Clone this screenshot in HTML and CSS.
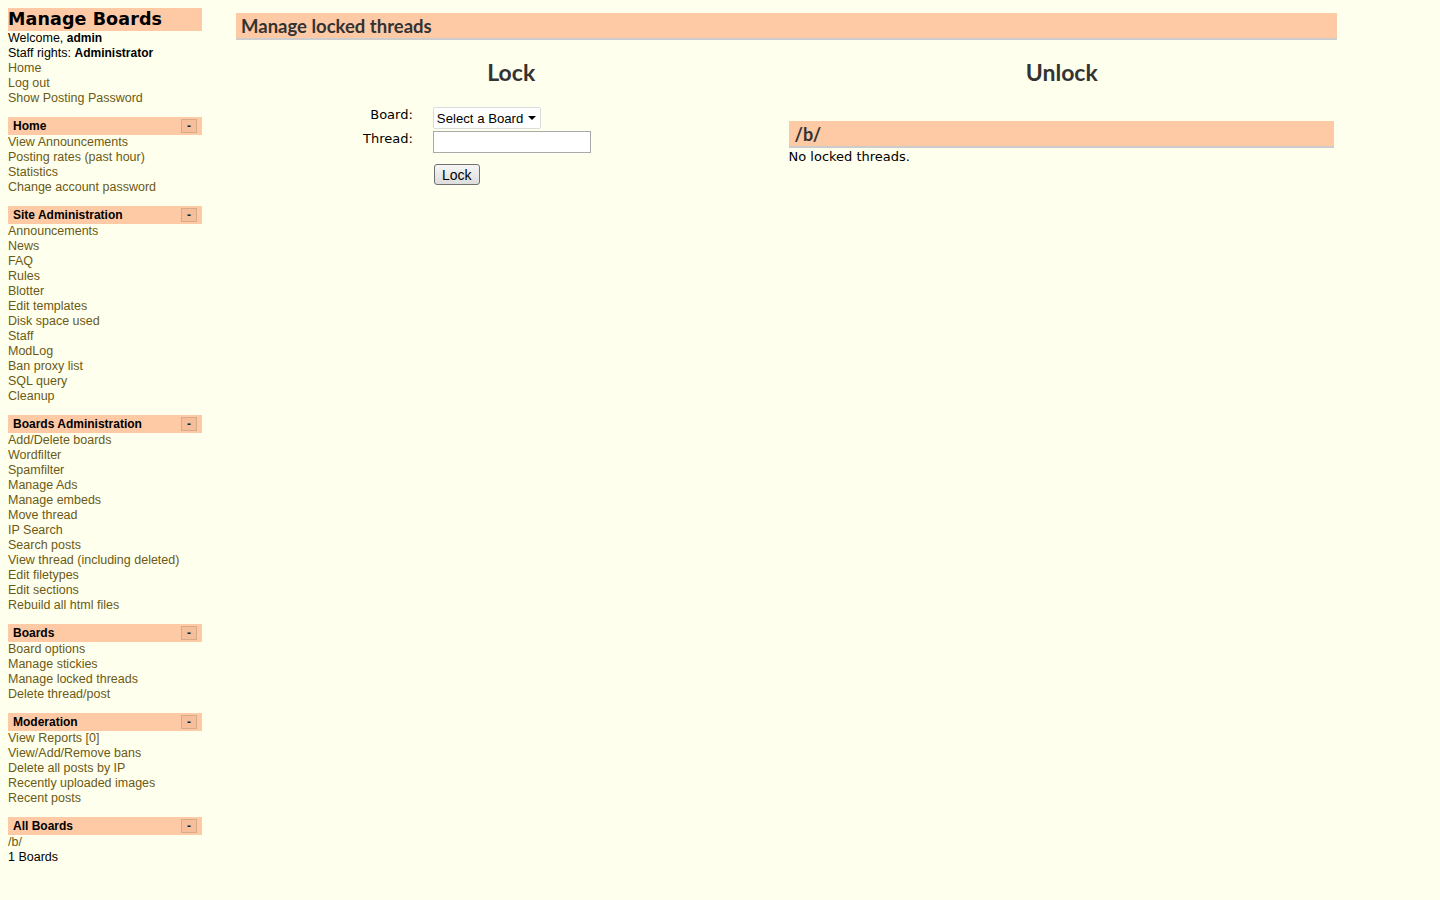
FILE: index.html
```html
<!DOCTYPE html>
<html>
<head>
<meta charset="utf-8">
<title>Manage locked threads</title>
<link rel="stylesheet" href="styles.css">
</head>
<body>
<div class="page">
  <aside class="menu">
    <h1 class="menu-title">Manage Boards</h1>
    <div class="line">Welcome, <b>admin</b></div>
    <div class="line">Staff rights: <b>Administrator</b></div>
    <a class="line" href="#">Home</a>
    <a class="line" href="#">Log out</a>
    <a class="line" href="#">Show Posting Password</a>

    <div class="section">
      <div class="section-head"><span>Home</span><span class="toggle">-</span></div>
      <a class="line" href="#">View Announcements</a>
      <a class="line" href="#">Posting rates (past hour)</a>
      <a class="line" href="#">Statistics</a>
      <a class="line" href="#">Change account password</a>
    </div>

    <div class="section">
      <div class="section-head"><span>Site Administration</span><span class="toggle">-</span></div>
      <a class="line" href="#">Announcements</a>
      <a class="line" href="#">News</a>
      <a class="line" href="#">FAQ</a>
      <a class="line" href="#">Rules</a>
      <a class="line" href="#">Blotter</a>
      <a class="line" href="#">Edit templates</a>
      <a class="line" href="#">Disk space used</a>
      <a class="line" href="#">Staff</a>
      <a class="line" href="#">ModLog</a>
      <a class="line" href="#">Ban proxy list</a>
      <a class="line" href="#">SQL query</a>
      <a class="line" href="#">Cleanup</a>
    </div>

    <div class="section">
      <div class="section-head"><span>Boards Administration</span><span class="toggle">-</span></div>
      <a class="line" href="#">Add/Delete boards</a>
      <a class="line" href="#">Wordfilter</a>
      <a class="line" href="#">Spamfilter</a>
      <a class="line" href="#">Manage Ads</a>
      <a class="line" href="#">Manage embeds</a>
      <a class="line" href="#">Move thread</a>
      <a class="line" href="#">IP Search</a>
      <a class="line" href="#">Search posts</a>
      <a class="line" href="#">View thread (including deleted)</a>
      <a class="line" href="#">Edit filetypes</a>
      <a class="line" href="#">Edit sections</a>
      <a class="line" href="#">Rebuild all html files</a>
    </div>

    <div class="section">
      <div class="section-head"><span>Boards</span><span class="toggle">-</span></div>
      <a class="line" href="#">Board options</a>
      <a class="line" href="#">Manage stickies</a>
      <a class="line" href="#">Manage locked threads</a>
      <a class="line" href="#">Delete thread/post</a>
    </div>

    <div class="section">
      <div class="section-head"><span>Moderation</span><span class="toggle">-</span></div>
      <a class="line" href="#">View Reports [0]</a>
      <a class="line" href="#">View/Add/Remove bans</a>
      <a class="line" href="#">Delete all posts by IP</a>
      <a class="line" href="#">Recently uploaded images</a>
      <a class="line" href="#">Recent posts</a>
    </div>

    <div class="section">
      <div class="section-head"><span>All Boards</span><span class="toggle">-</span></div>
      <a class="line" href="#">/b/</a>
      <div class="line">1 Boards</div>
    </div>
  </aside>

  <main class="main">
    <h2 class="main-head">Manage locked threads</h2>
    <div class="cols">
      <section class="col">
        <h3 class="col-title">Lock</h3>
        <table class="lock-form">
          <tr>
            <td class="lbl">Board:</td>
            <td class="fld">
              <div class="select"><span>Select a Board</span><span class="caret"></span></div>
            </td>
          </tr>
          <tr>
            <td class="lbl">Thread:</td>
            <td class="fld"><div class="input"></div></td>
          </tr>
          <tr>
            <td></td>
            <td class="fld btn-cell"><button class="btn">Lock</button></td>
          </tr>
        </table>
      </section>
      <section class="col">
        <h3 class="col-title">Unlock</h3>
        <h4 class="board-head">/b/</h4>
        <p class="empty">No locked threads.</p>
      </section>
    </div>
  </main>
</div>
</body>
</html>
```

FILE: styles.css
```css
html, body {
  margin: 0;
  padding: 0;
  background: #ffffee;
}

body {
  font-family: "Liberation Sans", Arial, sans-serif;
  font-size: 12.5px;
  color: #000;
}

b {
  font-size: 12px;
}

.page {
  display: flex;
  align-items: flex-start;
  padding: 8px 0 0 8px;
}

/* Sidebar */
.menu {
  width: 194px;
  flex: none;
}

.menu-title {
  margin: 0;
  height: 23px;
  line-height: 23px;
  background: #fecaa6;
  font-family: "DejaVu Sans", Verdana, sans-serif;
  font-weight: bold;
  font-size: 17.5px;
  color: #000;
  letter-spacing: 0.1px;
}

.line {
  display: block;
  height: 15px;
  line-height: 15px;
  white-space: nowrap;
  color: #000;
  text-decoration: none;
}

a.line {
  color: #6b5a14;
}

.section {
  margin-top: 11px;
}

.section-head {
  display: flex;
  align-items: center;
  justify-content: space-between;
  height: 18px;
  background: #fecaa6;
  padding: 0 5px 0 5px;
  font-weight: bold;
  font-size: 12px;
}

.toggle {
  display: flex;
  align-items: center;
  justify-content: center;
  width: 14px;
  height: 12px;
  border: 1px solid #d9a98a;
  background: #f5bf9c;
  font-weight: bold;
  font-size: 12px;
  line-height: 10px;
  color: #222;
}

/* Main */
.main {
  margin-left: 34px;
  margin-top: 5px;
  width: 1101px;
  flex: none;
}

.main-head {
  margin: 0;
  height: 25px;
  line-height: 26px;
  background: #fecaa6;
  border-bottom: 2px solid #cccccc;
  padding-left: 5px;
  font-family: "Lato", "DejaVu Sans", sans-serif;
  font-weight: bold;
  font-size: 18.5px;
  color: #333;
}

.cols {
  display: grid;
  grid-template-columns: 1fr 1fr;
}

.col-title {
  margin: 17px 0 0 0;
  text-align: center;
  font-family: "Lato", "DejaVu Sans", sans-serif;
  font-weight: bold;
  font-size: 23px;
  line-height: 30px;
  color: #333;
}

.lock-form {
  margin: 18px 0 0 125px;
  border-collapse: separate;
  border-spacing: 2px;
  font-family: "DejaVu Sans", Verdana, sans-serif;
  font-size: 13px;
  color: #000;
}

.lock-form td {
  padding: 0;
  vertical-align: top;
}

.lbl {
  text-align: right;
  padding-right: 18px !important;
  width: 48px;
  line-height: 15px;
}

.select {
  display: flex;
  align-items: center;
  white-space: nowrap;
  height: 22px;
  width: 108px;
  padding: 0 4px 0 3px;
  background: #fff;
  border: 1px solid #dcdcdc;
  border-radius: 2px;
  font-family: "Liberation Sans", Arial, sans-serif;
  font-size: 13.2px;
  color: #000;
  box-sizing: border-box;
}

.caret {
  margin-left: auto;
  width: 0;
  height: 0;
  border-left: 4px solid transparent;
  border-right: 4px solid transparent;
  border-top: 4px solid #000;
}

.input {
  width: 158px;
  height: 22px;
  box-sizing: border-box;
  background: #fff;
  border: 1px solid #a9a9a9;
}

.btn-cell {
  padding-top: 9px !important;
}

.btn {
  display: block;
  margin-left: 1px;
  width: 46px;
  height: 21px;
  padding: 0;
  font-family: "Liberation Sans", Arial, sans-serif;
  font-size: 14px;
  color: #000;
  background: linear-gradient(#f6f6f6, #dddddd);
  border: 1px solid #707070;
  border-radius: 3px;
}

.board-head {
  margin: 34px 3px 0 2px;
  height: 25px;
  line-height: 26px;
  background: #fecaa6;
  border-bottom: 2px solid #cccccc;
  padding-left: 6px;
  font-family: "Lato", "DejaVu Sans", sans-serif;
  font-weight: bold;
  font-size: 18px;
  color: #333;
}

.empty {
  margin: 1px 0 0 2px;
  font-family: "DejaVu Sans", Verdana, sans-serif;
  font-size: 13px;
  line-height: 16px;
  color: #000;
}
```
